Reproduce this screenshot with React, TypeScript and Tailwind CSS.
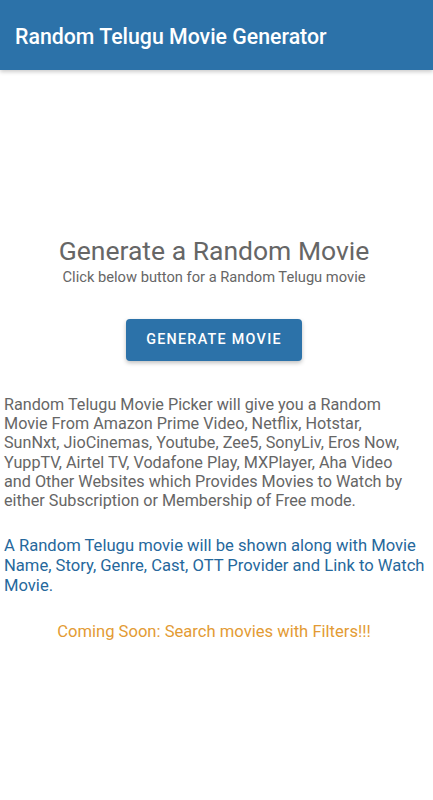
import React from "react";

export default function App() {
  return (
    <div className="min-h-[800px] bg-white" style={{ fontFamily: "Roboto, 'Noto Sans', sans-serif" }}>
      <header className="h-[70px] bg-[#2c72a9] flex items-center px-[15px] pt-[3px] shadow-[0_2px_4px_rgba(0,0,0,0.2)]">
        <h1 className="text-white text-[21.3px] font-medium">Random Telugu Movie Generator</h1>
      </header>
      <main className="flex flex-col">
        <div className="pt-[166px] pr-[5px] flex flex-col items-center">
          <h2 className="text-[26.5px] leading-[30px] text-[#666666]">Generate a Random Movie</h2>
          <p className="text-[14.7px] leading-[18px] text-[#666666] mt-[2px]">Click below button for a Random Telugu movie</p>
          <button className="mt-[33px] w-[176px] h-[42px] rounded-[4px] bg-[#2c72a9] text-white text-[14.3px] font-medium tracking-[1.3px] shadow-[0_2px_4px_rgba(0,0,0,0.25)]">
            GENERATE MOVIE
          </button>
        </div>
        <p className="mt-[34px] pl-[4px] pr-[16px] text-[16.2px] leading-[19.2px] text-[#666666]">
          Random Telugu Movie Picker will give you a Random Movie From Amazon Prime Video, Netflix, Hotstar, SunNxt, JioCinemas, Youtube, Zee5, SonyLiv, Eros Now, YuppTV, Airtel TV, Vodafone Play, MXPlayer, Aha Video and Other Websites which Provides Movies to Watch by either Subscription or Membership of Free mode.
        </p>
        <p className="mt-[26px] px-[4px] text-[16.6px] leading-[20px] text-[#26689c]">
          A Random Telugu movie will be shown along with Movie Name, Story, Genre, Cast, OTT Provider and Link to Watch Movie.
        </p>
        <p className="mt-[26px] pr-[5px] text-center text-[16.6px] leading-[19px] text-[#e39b34]">
          Coming Soon: Search movies with Filters!!!
        </p>
      </main>
    </div>
  );
}
